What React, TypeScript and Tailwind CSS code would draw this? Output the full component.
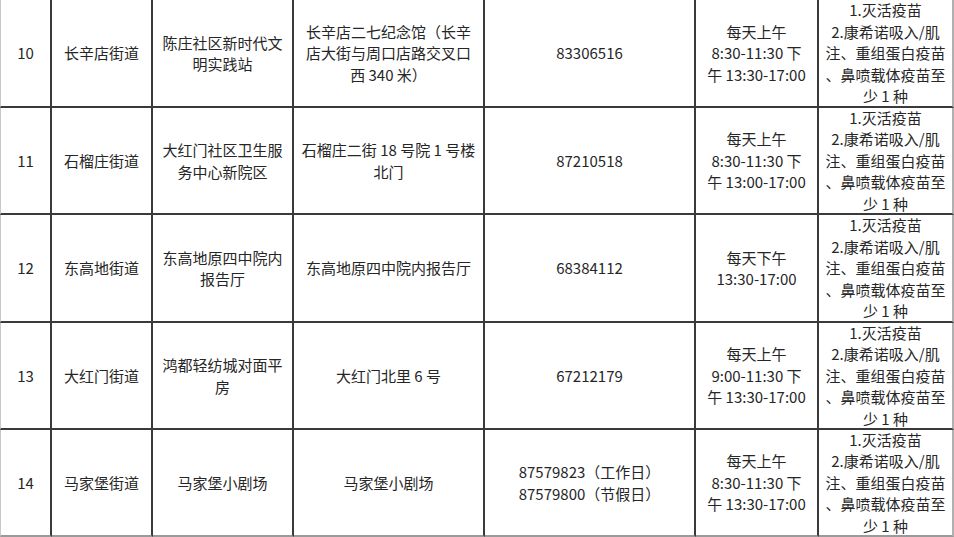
import React from "react";

type Row = {
  no: string;
  street: string;
  site: string[];
  addr: string[];
  phone: string[];
  time: string[];
};

const vaccine = ["1.灭活疫苗", "2.康希诺吸入/肌", "注、重组蛋白疫苗", "、鼻喷载体疫苗至", "少 1 种"];

const rows: Row[] = [
  {
    no: "10",
    street: "长辛店街道",
    site: ["陈庄社区新时代文", "明实践站"],
    addr: ["长辛店二七纪念馆（长辛", "店大街与周口店路交叉口", "西 340 米）"],
    phone: ["83306516"],
    time: ["每天上午", "8:30-11:30 下", "午 13:30-17:00"],
  },
  {
    no: "11",
    street: "石榴庄街道",
    site: ["大红门社区卫生服", "务中心新院区"],
    addr: ["石榴庄二街 18 号院 1 号楼", "北门"],
    phone: ["87210518"],
    time: ["每天上午", "8:30-11:30 下", "午 13:00-17:00"],
  },
  {
    no: "12",
    street: "东高地街道",
    site: ["东高地原四中院内", "报告厅"],
    addr: ["东高地原四中院内报告厅"],
    phone: ["68384112"],
    time: ["每天下午", "13:30-17:00"],
  },
  {
    no: "13",
    street: "大红门街道",
    site: ["鸿都轻纺城对面平", "房"],
    addr: ["大红门北里 6 号"],
    phone: ["67212179"],
    time: ["每天上午", "9:00-11:30 下", "午 13:30-17:00"],
  },
  {
    no: "14",
    street: "马家堡街道",
    site: ["马家堡小剧场"],
    addr: ["马家堡小剧场"],
    phone: ["87579823（工作日）", "87579800（节假日）"],
    time: ["每天上午", "8:30-11:30 下", "午 13:30-17:00"],
  },
];

function Lines({ lines }: { lines: string[] }) {
  return (
    <>
      {lines.map((l, i) => (
        <div key={i} className="whitespace-nowrap">
          {l}
        </div>
      ))}
    </>
  );
}

export default function App() {
  return (
    <div
      className="w-[954px] h-[537px] bg-white text-[#262626] text-[15px] leading-[21.5px] overflow-hidden"
      style={{ fontFamily: '"Noto Sans CJK SC", "Noto Sans", sans-serif' }}
    >
      <div className="grid grid-cols-[52px_101px_141px_191px_211px_123px_135px] grid-rows-[108px_107px_108px_107px_107px]">
        {rows.map((r, ri) => {
          const last = ri === rows.length - 1;
          const bb = last ? "border-b-2 border-b-[#9a9a9a]" : "border-b-2 border-b-[#3a3a3a]";
          const cell = `flex flex-col items-center justify-center text-center border-r-2 border-r-[#3a3a3a] ${bb}`;
          return (
            <React.Fragment key={r.no}>
              <div className={`${cell} border-l border-l-[#c8c8c8]`}>{r.no}</div>
              <div className={cell}>{r.street}</div>
              <div className={cell}>
                <Lines lines={r.site} />
              </div>
              <div className={cell}>
                <Lines lines={r.addr} />
              </div>
              <div className={cell}>
                <Lines lines={r.phone} />
              </div>
              <div className={cell}>
                <Lines lines={r.time} />
              </div>
              <div
                className={`flex flex-col items-center justify-center text-center border-r-2 border-r-[#b0b0b0] ${bb} overflow-hidden`}
              >
                <Lines lines={vaccine} />
              </div>
            </React.Fragment>
          );
        })}
      </div>
    </div>
  );
}
